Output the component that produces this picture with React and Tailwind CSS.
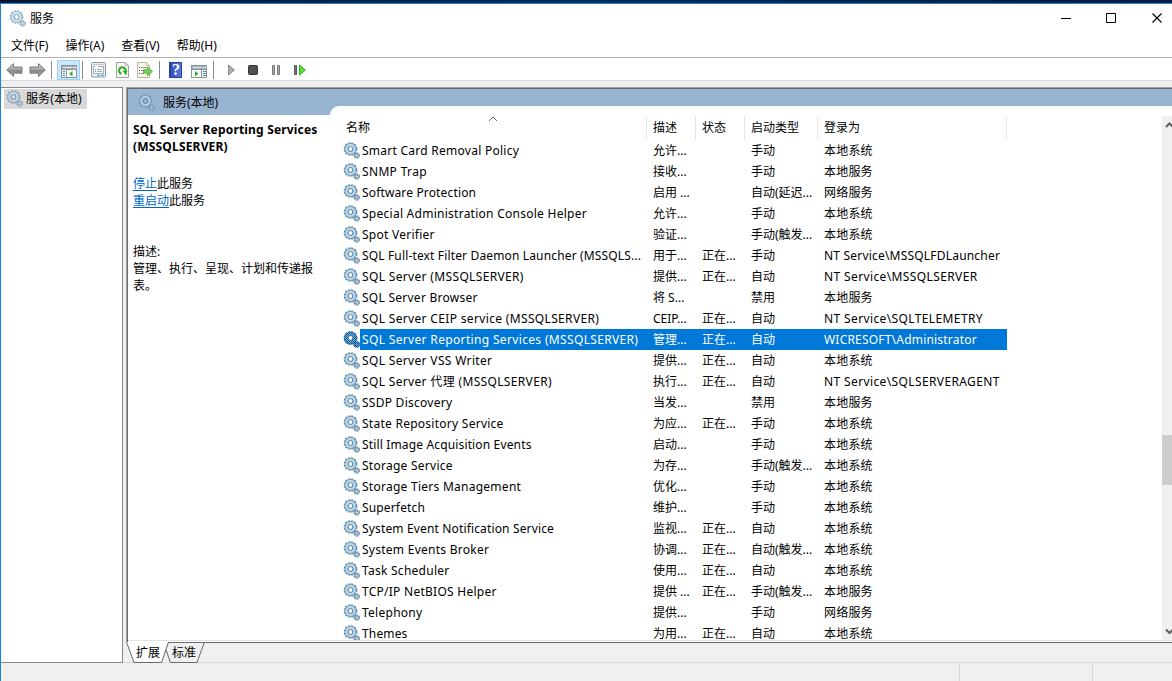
import React from 'react';
import clsx from 'clsx';

const SERVICES = [
  { name: 'Smart Card Removal Policy', desc: '允许...', status: '', start: '手动', logon: '本地系统' },
  { name: 'SNMP Trap', desc: '接收...', status: '', start: '手动', logon: '本地服务', spacing: 'wide' },
  { name: 'Software Protection', desc: '启用 ...', status: '', start: '自动(延迟...', logon: '网络服务', spacing: 'tight' },
  { name: 'Special Administration Console Helper', desc: '允许...', status: '', start: '手动', logon: '本地系统' },
  { name: 'Spot Verifier', desc: '验证...', status: '', start: '手动(触发...', logon: '本地系统' },
  { name: 'SQL Full-text Filter Daemon Launcher (MSSQLS...', desc: '用于...', status: '正在...', start: '手动', logon: 'NT Service\\MSSQLFDLauncher', spacing: 'tight' },
  { name: 'SQL Server (MSSQLSERVER)', desc: '提供...', status: '正在...', start: '自动', logon: 'NT Service\\MSSQLSERVER', spacing: 'wide' },
  { name: 'SQL Server Browser', desc: '将 S...', status: '', start: '禁用', logon: '本地服务' },
  { name: 'SQL Server CEIP service (MSSQLSERVER)', desc: 'CEIP...', status: '正在...', start: '自动', logon: 'NT Service\\SQLTELEMETRY', spacing: 'wide' },
  { name: 'SQL Server Reporting Services (MSSQLSERVER)', desc: '管理...', status: '正在...', start: '自动', logon: 'WICRESOFT\\Administrator', spacing: 'wide', selected: true },
  { name: 'SQL Server VSS Writer', desc: '提供...', status: '正在...', start: '自动', logon: '本地系统', spacing: 'wide' },
  { name: 'SQL Server 代理 (MSSQLSERVER)', desc: '执行...', status: '正在...', start: '自动', logon: 'NT Service\\SQLSERVERAGENT', spacing: 'wide' },
  { name: 'SSDP Discovery', desc: '当发...', status: '', start: '禁用', logon: '本地服务' },
  { name: 'State Repository Service', desc: '为应...', status: '正在...', start: '手动', logon: '本地系统' },
  { name: 'Still Image Acquisition Events', desc: '启动...', status: '', start: '手动', logon: '本地系统', spacing: 'tight' },
  { name: 'Storage Service', desc: '为存...', status: '', start: '手动(触发...', logon: '本地系统' },
  { name: 'Storage Tiers Management', desc: '优化...', status: '', start: '手动', logon: '本地系统' },
  { name: 'Superfetch', desc: '维护...', status: '', start: '手动', logon: '本地系统', spacing: 'tight' },
  { name: 'System Event Notification Service', desc: '监视...', status: '正在...', start: '自动', logon: '本地系统', spacing: 'tight' },
  { name: 'System Events Broker', desc: '协调...', status: '正在...', start: '自动(触发...', logon: '本地系统' },
  { name: 'Task Scheduler', desc: '使用...', status: '正在...', start: '自动', logon: '本地系统' },
  { name: 'TCP/IP NetBIOS Helper', desc: '提供 ...', status: '正在...', start: '手动(触发...', logon: '本地服务' },
  { name: 'Telephony', desc: '提供...', status: '', start: '手动', logon: '网络服务' },
  { name: 'Themes', desc: '为用...', status: '正在...', start: '自动', logon: '本地系统', spacing: 'tight' },
];

const TRACKING = {
  tight: 'tracking-[0.15px]',
  normal: 'tracking-[0.26px]',
  wide: 'tracking-[0.34px]',
};

function GearIcon({ selected = false, faded = false, className = '' }) {
  return (
    <svg width="17" height="17" viewBox="0 0 17 17" className={clsx('shrink-0', className)}>
      <g opacity={faded ? 0.7 : 1}>
        <circle cx="7.500" cy="7" r="5.9" fill="none" stroke="#638aa6" strokeWidth="1.9" strokeDasharray="2.05 1.04" />
        <circle cx="7.500" cy="7" r="4.2" fill="none" stroke="#7ba3c0" strokeWidth="3.6" />
        <circle cx="7.500" cy="7" r="4" fill="none" stroke="#bddcf0" strokeWidth="2.1" />
        <circle cx="7.500" cy="7" r="2.4" fill={faded ? 'none' : '#fff'} stroke="#4f7592" strokeWidth="0.9" />
        <circle cx="13.700" cy="13.500" r="2.5" fill="none" stroke="#6587a0" strokeWidth="1.6" strokeDasharray="1.3 0.66" />
        <circle cx="13.700" cy="13.500" r="1.5" fill="#dcebf4" stroke="#83a6be" strokeWidth="1.3" />
      </g>
      {selected && (
        <>
          <defs>
            <pattern id="dither" width="2" height="2" patternUnits="userSpaceOnUse">
              <rect width="2" height="2" fill="#0063b1" opacity="0.25" />
              <rect width="1" height="1" fill="#005a9e" />
              <rect x="1" y="1" width="1" height="1" fill="#005a9e" />
            </pattern>
          </defs>
          <g fill="none" stroke="url(#dither)">
            <circle cx="7.500" cy="7" r="4.6" strokeWidth="4.4" />
            <circle cx="13.700" cy="13.500" r="1.8" strokeWidth="3" />
          </g>
        </>
      )}
    </svg>
  );
}

function ArrowIcon({ right = false, className = '' }) {
  return (
    <svg width="17" height="14" viewBox="0 0 17 14" className={clsx('shrink-0', className)}>
      <defs>
        <linearGradient id="arrow" x1="0" y1="0" x2="0" y2="1">
          <stop offset="0" stopColor="#cfcfcf" />
          <stop offset="0.45" stopColor="#a6a6a6" />
          <stop offset="0.55" stopColor="#858585" />
          <stop offset="1" stopColor="#b0b0b0" />
        </linearGradient>
      </defs>
      <path
        d="M.7 7 7.500.6v3.400h8.500v6.200H7.500v3.300z"
        fill="url(#arrow)"
        stroke="#7c7c7c"
        strokeLinejoin="round"
        transform={right ? 'translate(17 0) scale(-1 1)' : undefined}
      />
    </svg>
  );
}

// Window with a tree pane (left) or an action pane (right)
function PaneIcon({ action = false, className = '' }) {
  return (
    <svg width="17" height="13" viewBox="0 0 17 13" shapeRendering="crispEdges" className={clsx('shrink-0', className)}>
      <rect x=".5" y=".5" width="15" height="12" fill="#fff" stroke="#8a949d" />
      <path d="M1 1h15v3H1z" fill="#a9b1b8" />
      <path d="M2 2.500h9" stroke="#dce1e5" />
      <path d="M12 2.500h1M14 2.500h1" stroke="#fff" />
      <path d="M1 4.500h15" stroke="#8a949d" />
      {action ? (
        <>
          <path d="M10.500 5v8" stroke="#8a949d" />
          <path d="M12 6.500h3M12 8.500h3M12 10.500h3" stroke="#4b86c4" />
          <path d="M4 6v5.500L7.500 8.700z" fill="#2bb324" shapeRendering="auto" />
        </>
      ) : (
        <>
          <path d="M5.500 5v8" stroke="#8a949d" />
          <path d="M2 6.500h2M2 8.500h2M2 10.500h2" stroke="#4b86c4" />
          <path d="M11.500 6v5.500L8 8.700z" fill="#2bb324" shapeRendering="auto" />
        </>
      )}
    </svg>
  );
}

function PropertiesIcon() {
  return (
    <svg width="15" height="16" viewBox="0 0 15 16" className="ml-[8px] shrink-0">
      <rect x=".5" y=".5" width="14" height="14.500" rx="1" fill="#eceff1" stroke="#8b959e" />
      <path d="M2 2.500h11" stroke="#c0c7ce" />
      <rect x="2.500" y="4.500" width="10" height="7" fill="#fff" stroke="#a4b0bc" />
      <path d="M4 4.500h3" stroke="#fff" />
      <path d="M4 7.500h1M4 9.500h1" stroke="#4c8bc5" />
      <path d="M6 7.500h5M6 9.500h5" stroke="#9ba7b3" />
      <path d="M6 13.300h3M10 13.300h3" stroke="#69b6e7" strokeWidth="1.500" />
    </svg>
  );
}

function RefreshIcon() {
  return (
    <svg width="13" height="16" viewBox="0 0 13 16" className="ml-[10px] shrink-0">
      <path d="M.5.5h8.800l3.200 3.200v11.800H.5z" fill="#fbfbf8" stroke="#a3a3a0" />
      <path d="M9.300.5v3.200h3.200" fill="none" stroke="#b9b9b5" />
      <path d="M5.500 11.800A3.300 3.300 0 1 1 9.600 9.300" fill="none" stroke="#2fae28" strokeWidth="2" />
      <path d="M6.200 8.600l5.200.2-1.200 4.600z" fill="#2fae28" />
    </svg>
  );
}

function ExportIcon() {
  return (
    <svg width="17" height="16" viewBox="0 0 17 16" className="ml-[8px] shrink-0">
      <path d="M.5.5h8.700l3.300 3.200v11.800H.5z" fill="#fffaea" stroke="#bdb498" />
      <path d="M9.200.5v3.200h3.300" fill="none" stroke="#c8bea2" />
      <path d="M2 5.500h1M2 8.500h1M2 11.500h1" stroke="#464646" />
      <path d="M4 5.500h6M4 8.500h3M4 11.500h3" stroke="#8e8db5" />
      <path d="M6.500 7.700h4V5l5 4.500-5 4.300v-2.700h-4z" fill="#6bd052" stroke="#43a735" strokeWidth=".7" />
    </svg>
  );
}

function HelpIcon() {
  return (
    <span className="ml-[9px] flex h-4 w-[13px] shrink-0 items-center justify-center border border-l-2 border-[#2b3f9c] bg-linear-to-r from-[#3152bb] to-[#5379dc] font-['Liberation_Serif',serif] text-[16px] leading-none font-bold text-white">
      ?
    </span>
  );
}

function Separator({ className = '' }) {
  return <span className={clsx('h-[18px] w-px shrink-0 bg-[#8c8c8c]', className)} />;
}

function Toolbar() {
  return (
    <div className="flex h-[24px] shrink-0 items-center border-t border-b border-t-[#b0b0b0] border-b-[#dadada] bg-white pt-[2px] pl-[5px]">
      <ArrowIcon />
      <ArrowIcon right className="ml-[6px]" />
      <Separator className="ml-[5px]" />
      <span className="ml-[5px] flex h-[20px] w-[23px] shrink-0 items-center justify-center border border-[#99d1ff] bg-[#cce8ff] pt-[2px] pl-px">
        <PaneIcon />
      </span>
      <Separator className="ml-[2px]" />
      <PropertiesIcon />
      <RefreshIcon />
      <ExportIcon />
      <Separator className="ml-[5px]" />
      <HelpIcon />
      <PaneIcon action className="mt-[3px] ml-[9px]" />
      <Separator className="ml-[5px]" />
      <svg width="80" height="14" viewBox="0 0 80 14" className="ml-[14px] shrink-0">
        <path d="M.5 2v10l6-5z" fill="#b0b0b0" stroke="#8a8a8a" />
        <rect x="20.500" y="2.500" width="9" height="9" rx="1" fill="#505050" stroke="#333" />
        <path d="M44.500 2.500h2v9h-2zM49.500 2.500h2v9h-2z" fill="#aaa" stroke="#787878" />
        <path d="M66.500 2.500h2v9h-2z" fill="#777" stroke="#555" />
        <path d="M71.500 2v10l6-5z" fill="#58dc3c" stroke="#36b426" />
      </svg>
    </div>
  );
}

function TitleBar() {
  return (
    <div className="flex h-[30px] shrink-0 items-center bg-white pb-px pl-[8px]">
      <GearIcon faded />
      <span className="ml-[4px]">服务</span>
      <svg width="112" height="30" viewBox="0 0 112 30" className="ml-auto" fill="none" stroke="#000">
        <path d="M1 14.500h10M46.500 9.500h9v9h-9z" />
        <path d="m92.500 9.500 9 9m0-9-9 9" strokeWidth="1.1" />
      </svg>
    </div>
  );
}

function ServiceRow({ service }) {
  const { name, desc, status, start, logon, spacing = 'normal', selected } = service;
  return (
    <div className="flex h-[21px] shrink-0 items-center leading-[13px]">
      <GearIcon selected={selected} className="ml-[13px]" />
      <div className={clsx('flex h-[21px] w-[647px] items-center whitespace-nowrap', selected && 'bg-[#0078d7] text-white')}>
        <span className={clsx('w-[293px] shrink-0 pl-[2px]', TRACKING[spacing])}>{name}</span>
        <span className="w-[49px] shrink-0">{desc}</span>
        <span className="w-[49px] shrink-0">{status}</span>
        <span className="w-[73px] shrink-0">{start}</span>
        {/* all-caps accounts are set wider */}
        <span className={/[A-Z]{9,}$/.test(logon) ? 'tracking-[0.38px]' : 'tracking-[0.2px]'}>{logon}</span>
      </div>
    </div>
  );
}

function ServiceList() {
  return (
    <div className="flex min-w-0 flex-1 flex-col overflow-hidden">
      <div className="mt-[10px] flex h-[24px] shrink-0 items-center">
        <div className="flex h-full w-[317px] items-center border-r border-[#e5e5e5] pb-[2px] pl-[16px]">
          名称
          <svg width="10" height="6" viewBox="0 0 10 6" className="mb-[17px] ml-[118px]">
            <path d="M1 5l4-4 4 4" fill="none" stroke="#6b6b6b" />
          </svg>
        </div>
        <div className="flex h-full w-[49px] items-center border-r border-[#e5e5e5] pb-[2px] pl-[6px]">描述</div>
        <div className="flex h-full w-[49px] items-center border-r border-[#e5e5e5] pb-[2px] pl-[6px]">状态</div>
        <div className="flex h-full w-[73px] items-center border-r border-[#e5e5e5] pb-[2px] pl-[6px]">启动类型</div>
        <div className="flex h-full w-[189px] items-center border-r border-[#e5e5e5] pb-[2px] pl-[6px]">登录为</div>
      </div>
      {SERVICES.map((service) => (
        <ServiceRow key={service.name} service={service} />
      ))}
    </div>
  );
}

function ScrollBar() {
  return (
    <div className="mt-[10px] flex w-[10px] shrink-0 flex-col overflow-hidden bg-[#f0f0f0]">
      <svg width="14" height="17" viewBox="0 0 14 17" className="shrink-0">
        <path d="M4 11l3.500-3.500L11 11" fill="none" stroke="#606060" strokeWidth="2" />
      </svg>
      <div className="mt-[302px] h-[50px] shrink-0 bg-[#cdcdcd]" />
      <svg width="14" height="17" viewBox="0 0 14 17" className="mt-auto shrink-0">
        <path d="M4 6.500l3.500 3.500L11 6.500" fill="none" stroke="#606060" strokeWidth="2" />
      </svg>
    </div>
  );
}

function DetailPane() {
  return (
    <div className="flex w-[202px] shrink-0 flex-col">
      <div className="flex h-[26px] shrink-0 items-center bg-[#99b4d1] pl-[10px]">
        <GearIcon faded />
        <span className="ml-[8px]">服务(本地)</span>
      </div>
      <div className="pl-[5px] leading-[17px]">
        <h1 className="mt-[6px] font-bold tracking-[0.18px] whitespace-nowrap">
          SQL Server Reporting Services
          <br />
          (MSSQLSERVER)
        </h1>
        <p className="mt-[20px]">
          <a className="text-[#0066cc] underline underline-offset-2">停止</a>此服务
        </p>
        <p>
          <a className="text-[#0066cc] underline underline-offset-2">重启动</a>此服务
        </p>
        <p className="mt-[34px]">描述:</p>
        <p className="w-[182px]">管理、执行、呈现、计划和传递报表。</p>
      </div>
    </div>
  );
}

function ViewTabs() {
  return (
    <div className="relative h-[21px] shrink-0">
      <svg width="1046" height="21" viewBox="0 0 1046 21" className="absolute top-0 left-0">
        <path d="M0-1l8 21h28l6-20V-1z" fill="#fff" />
        <path d="M42 .5h1004" stroke="#696969" />
        <path d="M.5 0l7.500 20.500h27.500L42.500 0" fill="none" stroke="#696969" />
        <path d="M40 8l4.500 12.500H71L78.500 0" fill="none" stroke="#696969" />
      </svg>
      <div className="relative flex h-full items-center gap-[12px] pl-[10px]">
        <span>扩展</span>
        <span>标准</span>
      </div>
    </div>
  );
}

export default function App() {
  return (
    <div className="flex h-[681px] w-[1172px] flex-col overflow-hidden bg-[#f0f0f0] font-['Noto_Sans','Noto_Sans_CJK_SC',sans-serif] text-[12px] leading-[17px] text-black">
      <div className="h-[3px] shrink-0 bg-linear-to-r from-[#00172f] via-[#002c59] to-[#001c3b]" />
      <div className="flex min-h-0 flex-1 flex-col border-t border-l border-[#1883d7]">
        <TitleBar />
        <div className="flex h-[23px] shrink-0 items-center gap-[17px] bg-white pl-[10px]">
          <span>文件(F)</span>
          <span>操作(A)</span>
          <span>查看(V)</span>
          <span>帮助(H)</span>
        </div>
        <Toolbar />
        <div className="flex h-[582px] shrink-0 border-b border-[#d7d7d7] pt-[6px]">
          <div className="h-[576px] w-[122px] shrink-0 border border-l-0 border-[#828790] bg-white">
            <div className="mt-px ml-[3px] flex h-[20px] w-[83px] items-center bg-[#d9d9d9] pb-px pl-[2px]">
              <GearIcon faded />
              <span className="ml-[3px] whitespace-nowrap tracking-[0.1px]">服务(本地)</span>
            </div>
          </div>
          <div className="ml-[3px] flex min-w-0 flex-1 flex-col">
            <div className="flex h-[555px] shrink-0 flex-col border-t border-l border-[#a0a0a0]">
              <div className="flex min-h-0 flex-1 flex-col border-t border-l border-[#696969] bg-white pb-px">
                <div className="flex min-h-0 flex-1 border-b border-[#e3e3e3]">
                  <DetailPane />
                  <div className="flex min-w-0 flex-1 flex-col bg-[#99b4d1]">
                    <div className="h-[17px] shrink-0" />
                    <div className="flex min-h-0 flex-1 rounded-tl-[9px] bg-white">
                      <ServiceList />
                      <ScrollBar />
                    </div>
                  </div>
                </div>
              </div>
            </div>
            <ViewTabs />
          </div>
        </div>
        <div className="flex flex-1 pt-px">
          <div className="w-[959px] border-r border-[#d7d7d7]" />
          <div className="w-[133px] border-r border-[#d7d7d7]" />
        </div>
      </div>
    </div>
  );
}
